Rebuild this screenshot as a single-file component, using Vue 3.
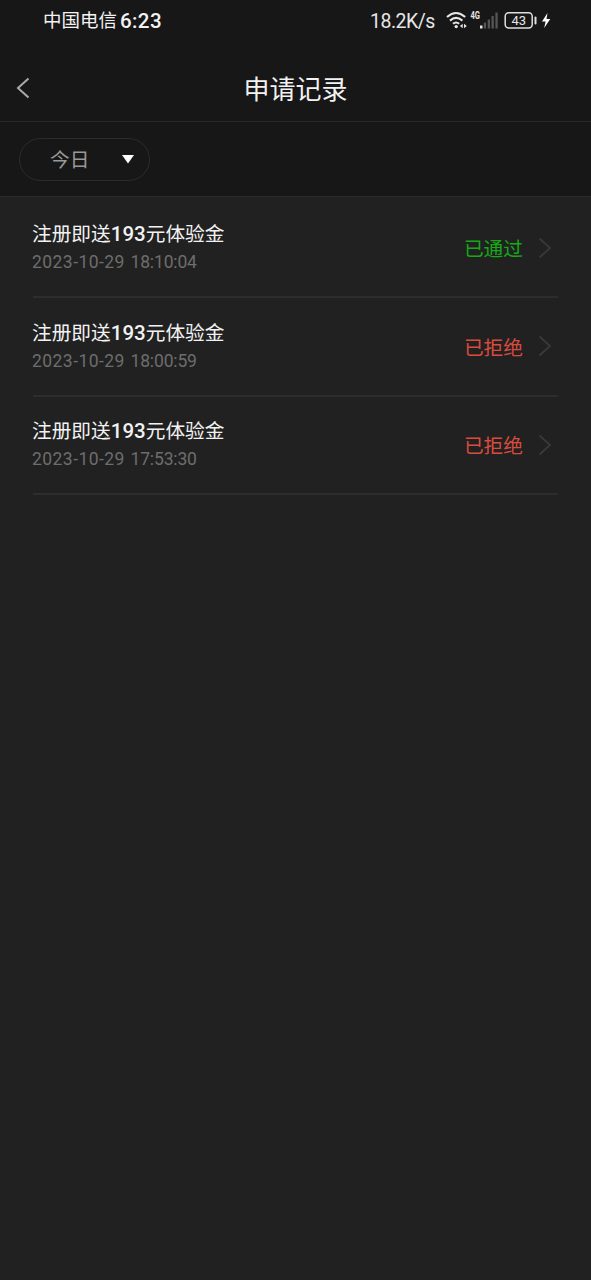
<script setup>
const records = [
  { title: ['注册即送', '193', '元体验金'], date: '2023-10-29', time: '18:10:04', status: '已通过', passed: true },
  { title: ['注册即送', '193', '元体验金'], date: '2023-10-29', time: '18:00:59', status: '已拒绝', passed: false },
  { title: ['注册即送', '193', '元体验金'], date: '2023-10-29', time: '17:53:30', status: '已拒绝', passed: false },
]
</script>

<template>
  <div class="screen">
    <div class="status-bar">
      <span class="carrier">中国电信</span>
      <span class="clock">6:23</span>
      <span class="speed">18.2K/s</span>
      <svg class="wifi" width="22" height="20" viewBox="0 0 22 20" fill="none" stroke="#e6e6e6" stroke-width="2.100">
        <path d="M1 6Q10 -2 19.200 6" />
        <path d="M4 9.600Q10 4.200 16.400 9.600" />
        <path d="M7 12.800Q10 10.200 13.200 12.800" />
        <circle cx="10.200" cy="15.600" r="1.700" fill="#e6e6e6" stroke="none" />
        <path d="M16.700 12.800v4.500l-2.800-2.200zM18 12.800v4.500l2.800-2.200z" fill="#e6e6e6" stroke="none" />
      </svg>
      <svg class="signal" width="29" height="20" viewBox="0 0 29 20">
        <text x="0.500" y="8.200" class="network" textLength="9.500" lengthAdjust="spacingAndGlyphs">4G</text>
        <rect x="10" y="14.500" width="2.500" height="3" fill="#e6e6e6" />
        <g fill="#555">
          <rect x="13.800" y="11.500" width="2.300" height="6" />
          <rect x="17.700" y="8.500" width="2.300" height="9" />
          <rect x="21.500" y="5" width="2.300" height="12.500" />
          <rect x="25.400" y="1.500" width="2.300" height="16" />
        </g>
      </svg>
      <svg class="battery" width="48" height="20" viewBox="0 0 48 20">
        <rect x="1.200" y="1.700" width="27" height="15.400" rx="3.500" fill="none" stroke="#e0e0e0" stroke-width="1.500" />
        <rect x="30.500" y="5.500" width="2" height="8" rx="1" fill="#e0e0e0" />
        <text x="14.700" y="14.200" class="level" text-anchor="middle">43</text>
        <path d="M43.500 2L38 10.600h3.600L40.200 17l6-9h-3.700z" fill="#fff" />
      </svg>
    </div>

    <header class="header">
      <svg class="back" width="16" height="24" viewBox="0 0 16 24" fill="none" stroke="#aaa" stroke-width="2">
        <path d="M13.500 2.500L3 12l10.500 9.500" />
      </svg>
      <h1>申请记录</h1>
    </header>

    <div class="filter">
      <button class="range">
        <span>今日</span>
        <svg width="12" height="9" viewBox="0 0 12 9"><path d="M0 0h12L6 8.500z" fill="#fff" /></svg>
      </button>
    </div>

    <main class="list">
      <div v-for="(record, i) in records" :key="i" class="row">
        <div class="info">
          <div class="title">{{ record.title[0] }}<b>{{ record.title[1] }}</b>{{ record.title[2] }}</div>
          <div class="stamp">
            <span class="date">{{ record.date }}</span>
            <span class="time">{{ record.time }}</span>
          </div>
        </div>
        <span class="result" :class="{ passed: record.passed }">{{ record.status }}</span>
        <svg class="arrow" width="14" height="22" viewBox="0 0 14 22" fill="none" stroke="#393939" stroke-width="1.800">
          <path d="M1.500 1.500L12 11 1.500 20.500" />
        </svg>
      </div>
    </main>
  </div>
</template>

<style>
body {
  margin: 0;
  background: #212121;
}
</style>

<style scoped>
.screen {
  box-sizing: border-box;
  width: 591px;
  height: 1280px;
  overflow: hidden;
  background: #212121;
  color: #f2f2f2;
  font-family: Roboto, "Noto Sans CJK SC", sans-serif;
}
.status-bar {
  display: flex;
  align-items: center;
  box-sizing: border-box;
  height: 56px;
  padding: 0 39px 15px 43px;
  background: #171717;
  line-height: 24px;
  white-space: nowrap;
}
.carrier {
  width: 77px;
  padding-top: 1px;
  font-size: 18.500px;
}
.clock {
  padding-top: 1px;
  font-size: 20.500px;
  font-weight: 500;
  letter-spacing: 0.400px;
}
.speed {
  width: 66px;
  margin-left: auto;
  margin-right: 10px;
  padding-top: 2px;
  font-size: 19.500px;
  letter-spacing: -0.500px;
  color: #e6e6e6;
}
.signal {
  margin-left: 2px;
  margin-right: 5px;
}
.network {
  font: 700 10px Roboto, sans-serif;
  fill: #e6e6e6;
}
.level {
  font: 400 13px Roboto, sans-serif;
  fill: #e6e6e6;
}
.header {
  display: grid;
  grid-template-columns: 60px 1fr 60px;
  align-items: center;
  box-sizing: border-box;
  height: 66px;
  border-bottom: 1px solid #282828;
  background: #171717;
}
.back {
  margin: 0 0 1px 15px;
}
h1 {
  margin: 2px 0 0;
  text-align: center;
  font-size: 26px;
  line-height: 36px;
  font-weight: 400;
}
.filter {
  box-sizing: border-box;
  height: 75px;
  padding: 16px 19px;
  border-bottom: 1px solid #2b2b2b;
  background: #171717;
}
.range {
  display: flex;
  align-items: center;
  justify-content: space-between;
  box-sizing: border-box;
  width: 131px;
  height: 43px;
  padding: 0 15px 0 30px;
  border: 1px solid #2c2c2c;
  border-radius: 22px;
  background: transparent;
  color: #999;
  font-family: inherit;
  font-size: 19.700px;
}
.range span {
  margin-top: -2px;
}
.list {
  padding: 2.500px 33px 0;
}
.row {
  display: flex;
  align-items: center;
  box-sizing: border-box;
  height: 98.500px;
  border-bottom: 2px solid #2d2d2d;
}
.info {
  flex: 1;
  margin-left: -1px;
  padding-top: 1px;
}
.title {
  font-size: 19.700px;
  line-height: 28px;
  white-space: nowrap;
}
.title b {
  font-size: 20.500px;
  font-weight: 500;
}
.stamp {
  display: flex;
  font-size: 17.500px;
  line-height: 27px;
  color: #6d6d6d;
}
.date {
  width: 98.500px;
  letter-spacing: 0.450px;
}
.time {
  letter-spacing: -0.150px;
}
.result {
  margin-right: 15px;
  font-size: 19.700px;
  color: #d94b3d;
}
.result.passed {
  color: #16a916;
}
.arrow {
  margin-right: 6px;
}
</style>
